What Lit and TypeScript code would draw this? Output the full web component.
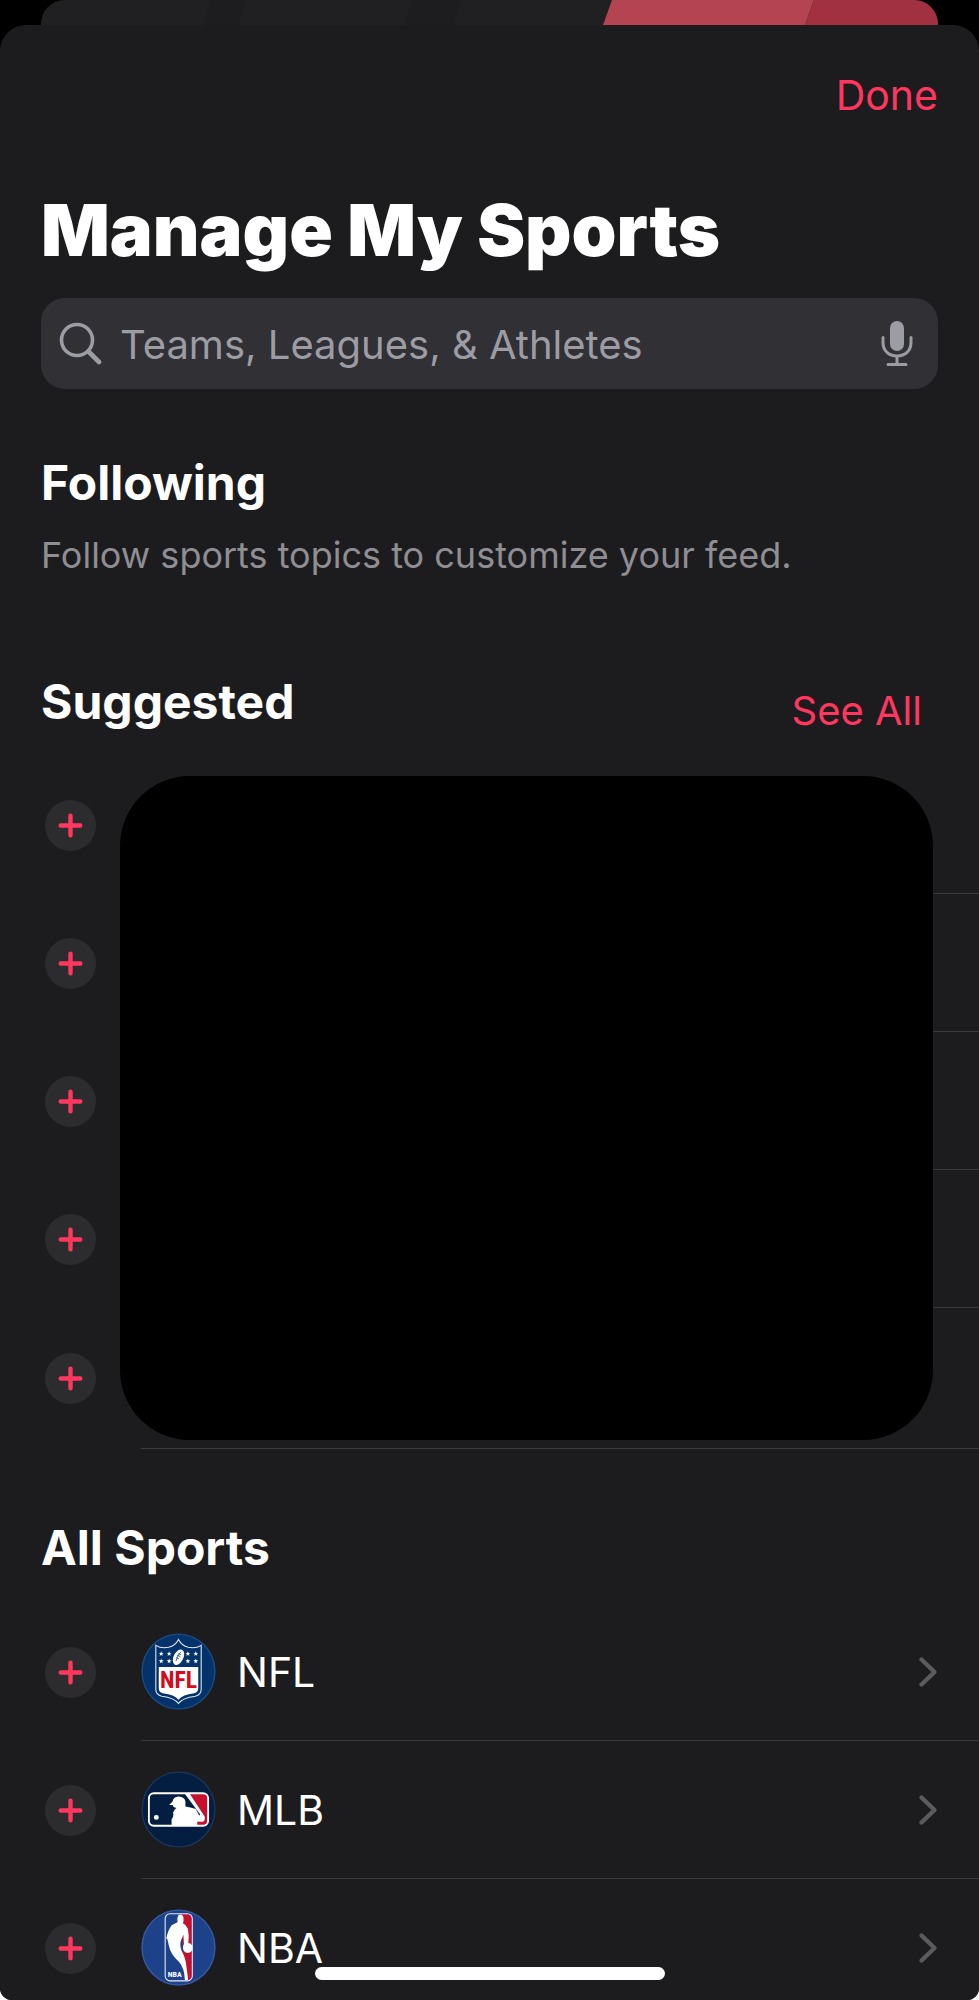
import { LitElement, html, css, svg } from "lit";
import { customElement, property } from "lit/decorators.js";

const star = (x: number, y: number) => svg`
  <path fill="#fff" transform="translate(${x} ${y})"
    d="M0-2.6.65-.8 2.5-.8 1 .35 1.55 2.2 0 1.1-1.55 2.2-1 .35-2.5-.8-.65-.8Z"/>`;

const nflLogo = html`
  <svg viewBox="0 0 76 78" aria-hidden="true">
    <ellipse cx="38" cy="39" rx="37.5" ry="38.5" fill="#03336a"/>
    <ellipse cx="38" cy="39" rx="36.9" ry="37.9" fill="none" stroke="#1d4a7c" stroke-width="1.4"/>
    <path d="M38 6.5Q35 12.5 28 14.5 20.5 16 15 12.5V57Q15 62.5 21 64 34 65.5 38 71.5 42 65.5 55 64 61 62.5 61 57V12.5Q55.5 16 48 14.5 41 12.5 38 6.5Z"
      fill="#03336a" stroke="#dfe7f1" stroke-width="1.1"/>
    <path d="M18 34.5H58V56Q58 60 54 61 42 62.5 38 67.5 34 62.5 22 61 18 60 18 56Z" fill="#fff"/>
    ${[20.5, 28.5, 47.5, 55.5].map((x) => [21, 28.5].map((y) => star(x, y)))}
    <ellipse cx="38" cy="24.5" rx="5" ry="8.4" transform="rotate(26 38 24.5)" fill="#fff"/>
    <path d="M35.5 28.5Q36.5 23 40.5 19M36.5 22.5 40 24M37.7 20.8 40.7 22.2M35.7 25 38.5 26.2" fill="none" stroke="#03336a" stroke-width=".7"/>
    <text x="38" y="56" class="mark-nfl">NFL</text>
  </svg>`;

const mlbLogo = html`
  <svg viewBox="0 0 76 78" aria-hidden="true">
    <ellipse cx="38" cy="39" rx="37.5" ry="38.5" fill="#041e42"/>
    <ellipse cx="38" cy="39" rx="36.9" ry="37.9" fill="none" stroke="#1d3658" stroke-width="1.4"/>
    <rect x="8" y="22.5" width="60" height="33" rx="5" fill="#041e42"/>
    <path d="M47 22.5H63Q68 22.5 68 27.5V50.5Q68 55.5 63 55.5H56V52L62 51 64 48Z" fill="#c8102e"/>
    <path d="M44 22.5H49L64.5 46Q65.5 49.5 63 51.5H57V55.5H31V49Q33.5 46 32.5 42 34.5 38 36 37.5 32.5 37 32 34.5L28.5 34.5 32 31Q32.5 26 38 25.7 44.5 26 45 31V36Q50 37 55.5 38.5L59 45 60 44Z" fill="#fff"/>
    <circle cx="15.5" cy="47" r="2.5" fill="#fff"/>
    <rect x="8" y="22.5" width="60" height="33" rx="5" fill="none" stroke="#fff" stroke-width="1.9"/>
  </svg>`;

const nbaLogo = html`
  <svg viewBox="0 0 76 78" aria-hidden="true">
    <ellipse cx="38" cy="39" rx="37.5" ry="38.5" fill="#1d428a"/>
    <ellipse cx="38" cy="39" rx="36.9" ry="37.9" fill="none" stroke="#3658a0" stroke-width="1.4"/>
    <path d="M40 5H46.5Q51.5 5 51.5 10V67.5Q51.5 72.5 46.5 72.5H45Z" fill="#c8102e"/>
    <path d="M38 6Q41.5 4.5 43 8 43.5 12 42.5 14.5 46 16 47.5 20 49 27 48 34.5A5 5 0 1 1 42.5 39.5Q42.5 37 43.5 35.5L43 26 40.5 32Q39 36 41 42 45.5 50 46 58L47.5 69.5 47.5 72H44.5Q44 60 38.5 53.5 30 46 28.5 38L26.5 30 25.5 30.5Q27 22 31 16.5 34 15 37 13.5Q36 9 38 6Z" fill="#fff"/>
    <rect x="24.5" y="4.8" width="27.5" height="68" rx="5" fill="none" stroke="#e6ebf5" stroke-width="1.1"/>
    <text x="27" y="69" class="mark-nba">NBA</text>
  </svg>`;

interface League {
  name: string;
  logo: unknown;
}

const leagues: League[] = [
  { name: "NFL", logo: nflLogo },
  { name: "MLB", logo: mlbLogo },
  { name: "NBA", logo: nbaLogo },
];

@customElement("follow-button")
class FollowButton extends LitElement {
  @property() label = "";

  static styles = css`
    :host {
      display: block;
      flex: none;
    }
    .follow {
      display: grid;
      place-items: center;
      width: 51px;
      height: 51px;
      padding: 0;
      border: 0;
      border-radius: 50%;
      background: #2c2c2e;
      cursor: pointer;
    }
    .plus {
      display: block;
      width: 25px;
      height: 25px;
    }
  `;

  render() {
    return html`
      <button class="follow" type="button" aria-label=${this.label}>
        <svg class="plus" viewBox="0 0 25 25" fill="none" stroke="#ff375f" stroke-width="4.4" stroke-linecap="round">
          <path d="M12.5 2.7V22.3M2.7 12.5H22.3" />
        </svg>
      </button>`;
  }
}

@customElement("app-root")
class AppRoot extends LitElement {
  static styles = css`
    :host {
      display: block;
      background: #fff;
      color: #fff;
      font-family: Inter, "Liberation Sans", sans-serif;
      font-size: 41px;
      line-height: 50px;
    }
    * {
      box-sizing: border-box;
    }
    h1, h2, p, ul {
      margin: 0;
      padding: 0;
    }
    .screen {
      position: relative;
      height: 100vh;
      overflow: hidden;
      border-radius: 0 0 12px 12px;
      background: #000;
    }
    .behind {
      height: 25px;
      margin: 0 41px;
      border-radius: 24px 24px 0 0;
      overflow: hidden;
      background: #202022;
    }
    .behind svg {
      display: block;
      width: 100%;
      height: 100%;
    }
    .sheet {
      min-height: calc(100vh - 25px);
      border-radius: 26px 26px 0 0;
      background: #1c1c1e;
      overflow: hidden;
    }
    .bar {
      display: flex;
      justify-content: flex-end;
      padding: 45px 41px 0;
    }
    .link {
      padding: 0;
      border: 0;
      background: none;
      color: #ff375f;
      font: inherit;
      cursor: pointer;
    }
    h1 {
      padding: 64px 41px 0;
      font-size: 72px;
      font-weight: 900;
      line-height: 92px;
    }
    .search {
      display: flex;
      align-items: center;
      gap: 18px;
      height: 91px;
      margin: 22px 41px 0;
      padding: 0 25px 0 18px;
      border-radius: 24px;
      background: #303035;
      color: #9c9ca4;
    }
    .search svg {
      flex: none;
      display: block;
    }
    .glass {
      width: 43px;
      height: 43px;
    }
    .field {
      flex: 1;
      min-width: 0;
      height: 62px;
      padding: 2px 0 0;
      border: 0;
      outline: 0;
      background: none;
      color: #fff;
      font: inherit;
      font-size: 40px;
    }
    .field::placeholder {
      color: #9c9ca4;
      opacity: 1;
    }
    .voice {
      padding: 0;
      border: 0;
      background: none;
      color: inherit;
      cursor: pointer;
    }
    .mic {
      width: 32px;
      height: 46px;
    }
    h2 {
      font-size: 48px;
      font-weight: 700;
      line-height: 60px;
    }
    .following {
      padding: 64px 41px 0;
    }
    .hint {
      padding-top: 18px;
      color: #8e8e93;
      font-size: 36px;
      line-height: 48px;
    }
    .head {
      display: flex;
      justify-content: space-between;
      align-items: flex-end;
      padding: 93px 57px 24px 41px;
    }
    .more {
      font-size: 40px;
      line-height: 42px;
    }
    .list {
      list-style: none;
    }
    .row {
      display: flex;
      align-items: center;
      height: 138px;
      padding-left: 45px;
    }
    .body {
      flex: 1;
      display: flex;
      align-items: center;
      align-self: stretch;
      gap: 21px;
      margin-left: 45px;
      padding-right: 41px;
      border-bottom: 1px solid #3a3a3d;
      color: #fff;
      text-decoration: none;
    }
    .suggested {
      position: relative;
    }
    .suggested .row:last-child {
      height: 141px;
    }
    .cover {
      position: absolute;
      inset: 20px 46px 9px 120px;
      border-radius: 70px;
      background: #000;
    }
    .all {
      padding: 69px 41px 25px;
    }
    .logo {
      flex: none;
      width: 75px;
      height: 77px;
    }
    .logo svg {
      display: block;
      width: 100%;
      height: 100%;
    }
    .mark-nfl {
      fill: #d50a1c;
      font: 700 24px "Liberation Sans Narrow", "Roboto Condensed", "Liberation Serif", serif;
      text-anchor: middle;
    }
    .mark-nba {
      fill: #fff;
      font: 700 8px "Liberation Sans Narrow", "Roboto Condensed", "Liberation Sans", sans-serif;
    }
    .name {
      flex: 1;
    }
    .chevron {
      flex: none;
      width: 20px;
      height: 32px;
    }
    .home {
      position: absolute;
      bottom: 20px;
      left: 50%;
      width: 350px;
      height: 13px;
      margin-left: -175px;
      border-radius: 7px;
      background: #fff;
    }
  `;

  render() {
    return html`
      <div class="screen">
        <div class="behind">
          <svg viewBox="0 0 897 25" preserveAspectRatio="none" aria-hidden="true">
            <path fill="#1d1d1f" d="M170 0H205L197 25H162ZM371 0H420L412 25H363Z" />
            <path fill="#b44452" d="M571 0H773L764 25H562Z" />
            <path fill="#a13040" d="M773 0H897V25H764Z" />
          </svg>
        </div>
        <main class="sheet">
          <div class="bar"><button class="link" type="button">Done</button></div>
          <h1>Manage My Sports</h1>
          <div class="search" role="search">
            <svg class="glass" viewBox="0 0 43 43" fill="none" stroke="currentColor" stroke-linecap="round" aria-hidden="true">
              <circle cx="18" cy="18" r="15.5" stroke-width="3.6" />
              <path d="M29.5 29.5 40 40" stroke-width="4.6" />
            </svg>
            <input class="field" type="text" aria-label="Search" placeholder="Teams, Leagues, &amp; Athletes" />
            <button class="voice" type="button" aria-label="Dictate">
              <svg class="mic" viewBox="0 0 32 46" fill="none" stroke="currentColor" stroke-linecap="round">
                <rect x="9" y="0" width="14" height="30" rx="7" fill="currentColor" stroke="none" />
                <path d="M2 16.5V21.5C2 30 8 35 16 35S30 30 30 21.5V16.5M16 35V43.5M7 43.5H25" stroke-width="3" />
              </svg>
            </button>
          </div>
          <section class="following">
            <h2>Following</h2>
            <p class="hint">Follow sports topics to customize your feed.</p>
          </section>
          <section>
            <div class="head">
              <h2>Suggested</h2>
              <button class="link more" type="button">See All</button>
            </div>
            <div class="suggested">
              <ul class="list">
                ${[1, 2, 3, 4, 5].map(
                  (n) => html`
                    <li class="row">
                      <follow-button label="Follow suggestion ${n}"></follow-button>
                      <div class="body"></div>
                    </li>`
                )}
              </ul>
              <div class="cover"></div>
            </div>
          </section>
          <section>
            <h2 class="all">All Sports</h2>
            <ul class="list">
              ${leagues.map(
                (l) => html`
                  <li class="row">
                    <follow-button label="Follow ${l.name}"></follow-button>
                    <a class="body" href="#${l.name}">
                      <span class="logo">${l.logo}</span>
                      <span class="name">${l.name}</span>
                      <svg class="chevron" viewBox="0 0 20 32" fill="none" stroke="#5a5a5f" stroke-width="4.4" stroke-linecap="round" stroke-linejoin="round" aria-hidden="true">
                        <path d="M3.5 3.5 16.5 16 3.5 28.5" />
                      </svg>
                    </a>
                  </li>`
              )}
            </ul>
          </section>
        </main>
        <div class="home"></div>
      </div>
    `;
  }
}
